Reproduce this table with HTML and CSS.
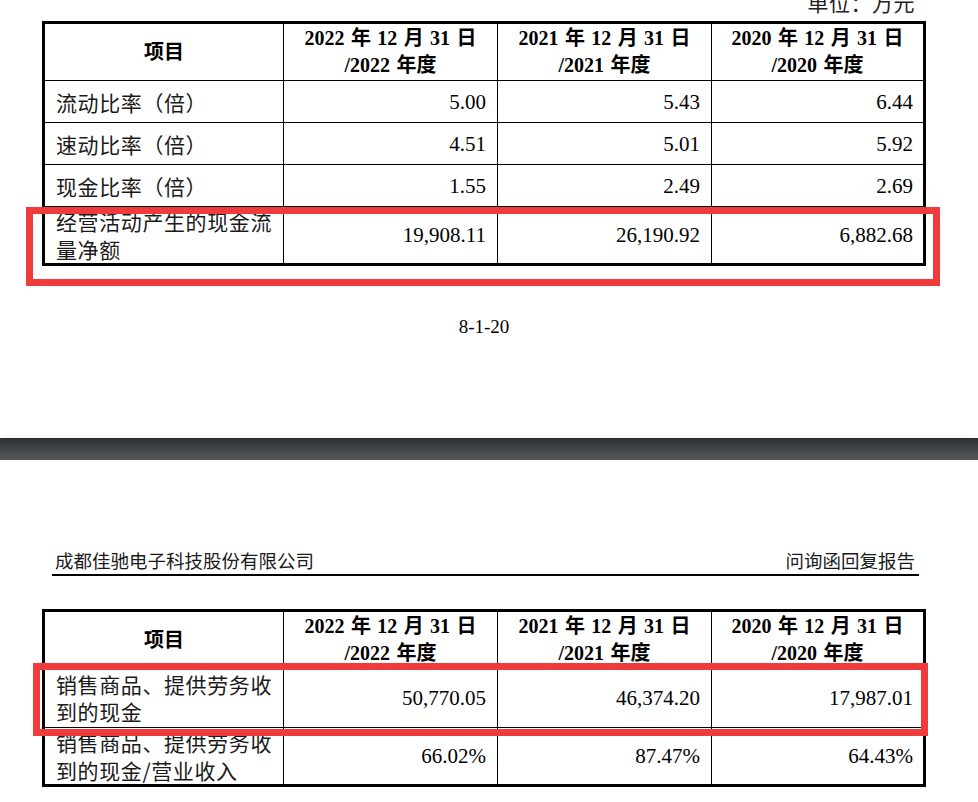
FILE: index.html
```html
<!DOCTYPE html>
<html lang="zh-CN">
<head>
<meta charset="utf-8">
<title>问询函回复报告 8-1-20</title>
<link rel="stylesheet" href="styles.css">
</head>
<body>
<section class="page page-top">
  <div class="unit">单位：万元</div>
  <div class="table-wrap">
    <table class="fin fin-1">
      <colgroup><col class="c1"><col class="c2"><col class="c3"><col class="c4"></colgroup>
      <thead>
        <tr class="head">
          <th>项目</th>
          <th>2022 年 12 月 31 日<br>/2022 年度</th>
          <th>2021 年 12 月 31 日<br>/2021 年度</th>
          <th>2020 年 12 月 31 日<br>/2020 年度</th>
        </tr>
      </thead>
      <tbody>
        <tr class="row"><td class="label">流动比率（倍）</td><td class="num">5.00</td><td class="num">5.43</td><td class="num">6.44</td></tr>
        <tr class="row"><td class="label">速动比率（倍）</td><td class="num">4.51</td><td class="num">5.01</td><td class="num">5.92</td></tr>
        <tr class="row"><td class="label">现金比率（倍）</td><td class="num">1.55</td><td class="num">2.49</td><td class="num">2.69</td></tr>
        <tr class="row tall last"><td class="label">经营活动产生的现金流量净额</td><td class="num">19,908.11</td><td class="num">26,190.92</td><td class="num">6,882.68</td></tr>
      </tbody>
    </table>
    <div class="mark mark-1"></div>
  </div>
  <div class="page-no">8-1-20</div>
</section>
<div class="page-gap"></div>
<section class="page page-bottom">
  <div class="running-head"><span>成都佳驰电子科技股份有限公司</span><span>问询函回复报告</span></div>
  <div class="table-wrap">
    <table class="fin fin-2">
      <colgroup><col class="c1"><col class="c2"><col class="c3"><col class="c4"></colgroup>
      <thead>
        <tr class="head">
          <th>项目</th>
          <th>2022 年 12 月 31 日<br>/2022 年度</th>
          <th>2021 年 12 月 31 日<br>/2021 年度</th>
          <th>2020 年 12 月 31 日<br>/2020 年度</th>
        </tr>
      </thead>
      <tbody>
        <tr class="row tall-2"><td class="label">销售商品、提供劳务收到的现金</td><td class="num">50,770.05</td><td class="num">46,374.20</td><td class="num">17,987.01</td></tr>
        <tr class="row tall-3 last"><td class="label">销售商品、提供劳务收到的现金/营业收入</td><td class="num">66.02%</td><td class="num">87.47%</td><td class="num">64.43%</td></tr>
      </tbody>
    </table>
    <div class="mark mark-2"></div>
  </div>
</section>
</body>
</html>
```
FILE: styles.css
```css
html, body {
  margin: 0;
  padding: 0;
  background: #ffffff;
}

body {
  width: 978px;
  overflow: hidden;
  color: #000;
  font-family: "Liberation Serif", "Noto Sans CJK SC", serif;
}

.unit {
  height: 21px;
  line-height: 8px;
  font-size: 21px;
  text-align: right;
  padding-right: 63px;
  color: #222;
  letter-spacing: 0.5px;
  font-family: "Liberation Serif", "Noto Sans CJK SC", serif;
}

.table-wrap {
  position: relative;
  margin-left: 42px;
  width: 884px;
}

.fin {
  width: 884px;
  table-layout: fixed;
  border-collapse: separate;
  border-spacing: 0;
  border: 3px solid #000;
}

.fin .c1 { width: 239px; }
.fin .c2 { width: 214px; }
.fin .c3 { width: 214px; }
.fin .c4 { width: 211px; }

.fin th,
.fin td {
  padding: 0 11px;
  border-right: 1px solid #000;
  border-bottom: 1px solid #000;
  vertical-align: middle;
}

.fin th:last-child,
.fin td:last-child {
  border-right: none;
}

.fin tr.last td {
  border-bottom: none;
}

.fin th {
  height: 56px;
  font-weight: bold;
  font-size: 20px;
  line-height: 27px;
  text-align: center;
  word-spacing: 1.4px;
  padding: 0 2px;
}

.fin .row td {
  height: 41px;
  font-size: 21px;
  line-height: 28px;
}

.fin .row.tall td { height: 56px; }
.fin .row.tall-2 td { height: 58px; line-height: 27px; }
.fin .row.tall-3 td { height: 55px; line-height: 28px; }

.fin td.label {
  text-align: left;
  padding-right: 3px;
  color: #1a1a1a;
  font-family: "Noto Sans CJK SC", "Liberation Serif", sans-serif;
  font-weight: 400;
  font-size: 21px;
  letter-spacing: 0.6px;
}

.fin td.num {
  text-align: right;
  padding-right: 11px;
}

.fin td.num:last-child {
  padding-right: 10px;
}

.mark {
  position: absolute;
  border: 7px solid #f03b3d;
  box-sizing: border-box;
  pointer-events: none;
}

.mark-1 {
  left: -16px;
  top: 186px;
  width: 914px;
  height: 79px;
}

.mark-2 {
  left: -9px;
  top: 54px;
  width: 895px;
  height: 73px;
}

.page-no {
  margin-top: 50px;
  margin-left: 42px;
  width: 884px;
  text-align: center;
  font-size: 19px;
  line-height: 21px;
  padding-bottom: 101px;
}

.page-gap {
  height: 22px;
  background: linear-gradient(to bottom, #2b2d30 0%, #383b3f 30%, #484c51 65%, #55575a 100%);
  box-shadow: 0 -5px 3px -3px rgba(0, 0, 0, 0.04);
}

.running-head {
  margin: 89px 59px 0 52px;
  padding: 0 4px 3px 3px;
  border-bottom: 2px solid #000;
  display: flex;
  justify-content: space-between;
  font-family: "Noto Sans CJK SC", sans-serif;
  font-size: 18.5px;
  line-height: 22px;
  color: #1a1a1a;
}

.page-bottom .table-wrap {
  margin-top: 33px;
}
```
